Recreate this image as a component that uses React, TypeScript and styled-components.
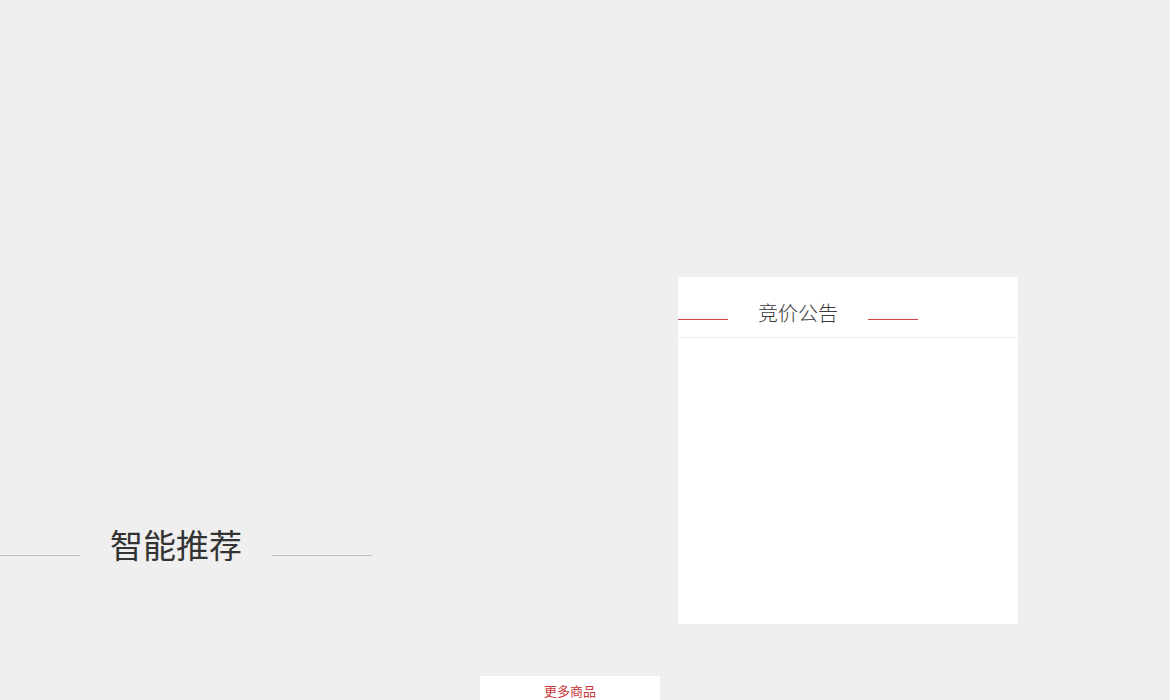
import styled, { createGlobalStyle } from 'styled-components';

const GlobalStyle = createGlobalStyle`
  html, body {
    margin: 0;
    padding: 0;
    background: #efefef;
    font-family: "Noto Sans CJK SC", "Noto Sans", sans-serif;
  }
`;

const App = () => {
  return (
    <PageStyle>
      <GlobalStyle />
      <MainRow>
        <LeftColumn>
          <SectionHeading>
            <GrayLine width={80} />
            <span className="text">智能推荐</span>
            <GrayLine width={100} />
          </SectionHeading>
        </LeftColumn>
        <NoticeCard>
          <CardHeader>
            <RedLine />
            <span className="title">竞价公告</span>
            <RedLine />
          </CardHeader>
        </NoticeCard>
      </MainRow>
      <MoreButton>更多商品</MoreButton>
    </PageStyle>
  );
};

export default App;

const PageStyle = styled.div`
  width: 1170px;
  height: 700px;
  overflow: hidden;
  background: #efefef;
`;

const MainRow = styled.div`
  display: flex;
  flex-direction: row;
  padding-top: 277px;
`;

const LeftColumn = styled.div`
  width: 678px;
  display: flex;
  flex-direction: column;
`;

const SectionHeading = styled.div`
  margin-top: 247px;
  height: 40px;
  display: flex;
  align-items: flex-start;

  .text {
    font-size: 33px;
    line-height: 40px;
    color: #333;
    margin: 0 30px;
  }
`;

const GrayLine = styled.div<{ width: number }>`
  width: ${(p) => p.width}px;
  height: 1px;
  background: #bdbdbd;
  margin-top: 31px;
`;

const NoticeCard = styled.div`
  width: 340px;
  height: 347px;
  background: #fff;
`;

const CardHeader = styled.div`
  box-sizing: border-box;
  height: 61px;
  border-bottom: 1px solid #eeeeee;
  display: flex;
  align-items: flex-start;

  .title {
    font-size: 20px;
    line-height: 28px;
    color: #3a3a3a;
    font-weight: 300;
    margin: 22px 30px 0;
  }
`;

const RedLine = styled.div`
  width: 50px;
  height: 1px;
  background: #d04448;
  margin-top: 42px;
`;

const MoreButton = styled.div`
  margin: 52px 0 0 480px;
  width: 180px;
  height: 30px;
  background: #fff;
  color: #c9373a;
  font-size: 13px;
  line-height: 30px;
  text-align: center;
`;
